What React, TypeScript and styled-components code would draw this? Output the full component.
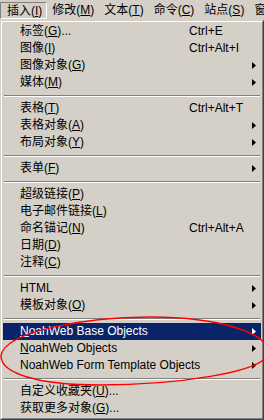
import React from "react"
import styled, { createGlobalStyle } from "styled-components"

type Entry =
  | { kind: "item"; label: string; shortcut?: string; sub?: boolean; active?: boolean }
  | { kind: "sep" }

const GlobalStyle = createGlobalStyle`
  html, body {
    margin: 0;
    padding: 0;
    background: #d4d0c8;
    overflow: hidden;
  }
  body {
    font-family: "Liberation Sans", "Noto Sans CJK SC", sans-serif;
    font-size: 12px;
    color: #000;
  }
`

const Screen = styled.div`
  position: relative;
  width: 264px;
  height: 420px;
  overflow: hidden;
  background: #d4d0c8;
`

const MenuBar = styled.div`
  display: flex;
  height: 20px;
  padding-top: 2px;
  box-sizing: border-box;
  white-space: nowrap;
  overflow: hidden;
`

const BarItem = styled.div<{ pressed?: boolean }>`
  height: 17px;
  line-height: 15px;
  padding: ${({ pressed }) => (pressed ? "1px 4px 0 6px" : "0 4px 1px 4px")};
  box-sizing: border-box;
  border: 1px solid transparent;
  border-color: ${({ pressed }) =>
    pressed ? "#808080 #fff #fff #808080" : "transparent"};
  flex-shrink: 0;
`

const Dropdown = styled.div`
  width: 264px;
  box-sizing: border-box;
  border-style: solid;
  border-width: 1px;
  border-color: #d4d0c8 #404040 #404040 #d4d0c8;
`

const DropdownInner = styled.div`
  border-style: solid;
  border-width: 1px;
  border-color: #fff #808080 #808080 #fff;
  padding: 1px;
`

const Row = styled.div<{ active?: boolean }>`
  display: grid;
  grid-template-columns: 169px 1fr 9px;
  align-items: center;
  height: 17px;
  line-height: 17px;
  padding-left: 17px;
  background: ${({ active }) => (active ? "#0a246a" : "transparent")};
  color: ${({ active }) => (active ? "#fff" : "#000")};
  white-space: nowrap;
`

const Label = styled.span``

const Shortcut = styled.span``

const Arrow = styled.svg`
  display: block;
  width: 4px;
  height: 7px;
`

const Separator = styled.div`
  height: 9px;
  display: flex;
  flex-direction: column;
  justify-content: center;
  padding: 0 1px;

  &::before {
    content: "";
    display: block;
    height: 1px;
    background: #808080;
  }
  &::after {
    content: "";
    display: block;
    height: 1px;
    background: #fff;
  }
`

const Annotation = styled.svg`
  position: absolute;
  left: 0;
  top: 0;
  width: 264px;
  height: 420px;
  pointer-events: none;
`

// "&" marks the access key letter
const Mnemonic = ({ text }: { text: string }): JSX.Element => {
  const i = text.indexOf("&")
  if (i < 0) return <>{text}</>
  return (
    <>
      {text.slice(0, i)}
      <u>{text[i + 1]}</u>
      {text.slice(i + 2)}
    </>
  )
}

const topMenus = ["插入(&I)", "修改(&M)", "文本(&T)", "命令(&C)", "站点(&S)", "窗"]

const entries: Entry[] = [
  { kind: "item", label: "标签(&G)...", shortcut: "Ctrl+E" },
  { kind: "item", label: "图像(&I)", shortcut: "Ctrl+Alt+I" },
  { kind: "item", label: "图像对象(&G)", sub: true },
  { kind: "item", label: "媒体(&M)", sub: true },
  { kind: "sep" },
  { kind: "item", label: "表格(&T)", shortcut: "Ctrl+Alt+T" },
  { kind: "item", label: "表格对象(&A)", sub: true },
  { kind: "item", label: "布局对象(&Y)", sub: true },
  { kind: "sep" },
  { kind: "item", label: "表单(&F)", sub: true },
  { kind: "sep" },
  { kind: "item", label: "超级链接(&P)" },
  { kind: "item", label: "电子邮件链接(&L)" },
  { kind: "item", label: "命名锚记(&N)", shortcut: "Ctrl+Alt+A" },
  { kind: "item", label: "日期(&D)" },
  { kind: "item", label: "注释(&C)" },
  { kind: "sep" },
  { kind: "item", label: "HTML", sub: true },
  { kind: "item", label: "模板对象(&O)", sub: true },
  { kind: "sep" },
  { kind: "item", label: "&NoahWeb Base Objects", sub: true, active: true },
  { kind: "item", label: "&NoahWeb Objects", sub: true },
  { kind: "item", label: "NoahWeb Form Template Objects", sub: true },
  { kind: "sep" },
  { kind: "item", label: "自定义收藏夹(&U)..." },
  { kind: "item", label: "获取更多对象(&G)..." },
]

const App = (): JSX.Element => {
  return (
    <Screen>
      <GlobalStyle />
      <MenuBar>
        {topMenus.map(
          (m, i): JSX.Element => (
            <BarItem key={`top-${i}`} pressed={i === 0}>
              <Mnemonic text={m} />
            </BarItem>
          )
        )}
      </MenuBar>
      <Dropdown>
        <DropdownInner>
          {entries.map(
            (e, i): JSX.Element =>
              e.kind === "sep" ? (
                <Separator key={`sep-${i}`} />
              ) : (
                <Row key={`row-${i}`} active={e.active}>
                  <Label>
                    <Mnemonic text={e.label} />
                  </Label>
                  <Shortcut>{e.shortcut}</Shortcut>
                  {e.sub ? (
                    <Arrow viewBox="0 0 4 7">
                      <polygon points="0,0 4,3.5 0,7" fill={e.active ? "#fff" : "#000"} />
                    </Arrow>
                  ) : (
                    <span />
                  )}
                </Row>
              )
          )}
        </DropdownInner>
      </Dropdown>
      <Annotation viewBox="0 0 264 420">
        <path
          d="M 1 356 C 1 374, 40 385, 100 385 C 170 385, 268 373, 268 352 C 268 334, 222 317, 150 317 C 88 317, 4 331, 1 356 Z"
          fill="none"
          stroke="#ff0000"
          strokeWidth="1.4"
        />
      </Annotation>
    </Screen>
  )
}

export default App
